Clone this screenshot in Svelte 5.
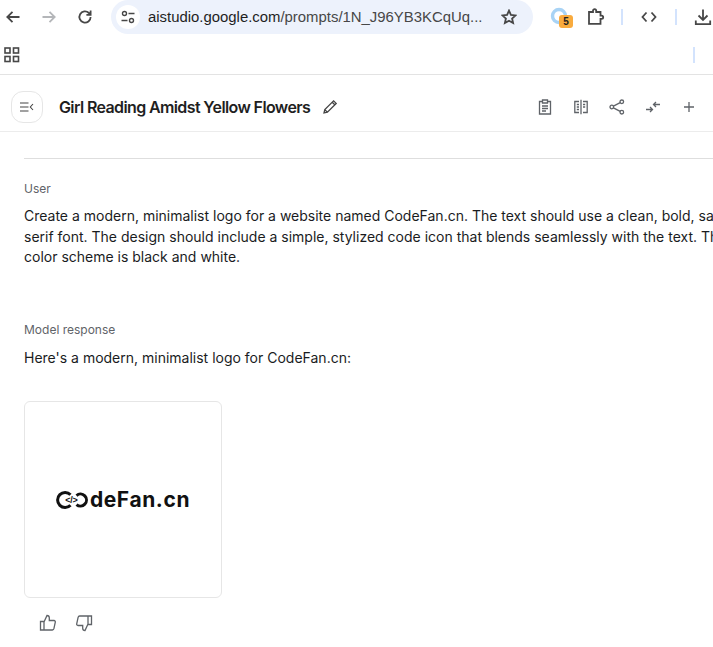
<script>
    const paragraph = 'Create a modern, minimalist logo for a website named CodeFan.cn. The text should use a clean, bold, sans-serif font. The design should include a simple, stylized code icon that blends seamlessly with the text. The color scheme is black and white.';
</script>

<div class="page">
    <div class="toolbar">
        <div class="nav">
            <svg width="16" height="16" viewBox="0 0 16 16" class="dark"><path d="M14.5 8H2.5M7.5 2.8 2.3 8l5.2 5.2" /></svg>
            <svg width="16" height="16" viewBox="0 0 16 16" class="muted"><path d="M1.5 8h12M8.5 2.8 13.7 8l-5.2 5.2" /></svg>
            <svg width="16" height="16" viewBox="0 0 16 16" class="dark"><path d="M13.6 8a5.6 5.6 0 1 1-1.7-4L13.6 5.7M13.6 1.6v4.2H9.4" /></svg>
        </div>
        <div class="omnibox">
            <span class="tune">
                <svg width="16" height="16" viewBox="0 0 16 16" class="dark thin"><circle cx="4.5" cy="4.5" r="2" /><path d="M8.5 4.5h6M1.5 11.5h6" /><circle cx="11.5" cy="11.5" r="2" /></svg>
            </span>
            <span class="url">aistudio.google.com<span class="path">/prompts/1N_J96YB3KCqUq...</span></span>
            <svg class="star dark" width="16" height="16" viewBox="0 0 16 16"><path d="M8 1.6l1.9 4.3 4.7.5-3.5 3.1 1 4.6L8 11.8l-4.1 2.3 1-4.6-3.5-3.1 4.7-.5z" /></svg>
        </div>
        <div class="extensions">
            <span class="ext-g">
                <svg width="20" height="20" viewBox="0 0 20 20"><circle cx="9" cy="9" r="6.5" fill="none" stroke="#a8d3f5" stroke-width="3.4" /></svg>
                <span class="badge">5</span>
            </span>
            <svg class="puzzle dark" width="18" height="18" viewBox="0 0 18 18"><path d="M2 4h4V2.8a1.6 1.6 0 0 1 3.2 0V4h4.3v3.6h1.1a1.6 1.6 0 0 1 0 3.2h-1.1v5H2z" /></svg>
            <span class="sep"></span>
            <svg class="code dark" width="16" height="16" viewBox="0 0 16 16"><path d="M5.5 3.5 1.5 8l4 4.5M10.5 3.5l4 4.5-4 4.5" /></svg>
            <span class="sep"></span>
            <svg class="download dark" width="18" height="18" viewBox="0 0 18 18"><path d="M9 1.5v10M4.5 7.5 9 12l4.5-4.5M1.8 12.5v3.7h14.4v-3.7" /></svg>
        </div>
    </div>

    <div class="bookmarks">
        <svg width="16" height="16" viewBox="0 0 16 16" class="grid-icon">
            <rect x="1" y="1" width="5" height="5" /><rect x="9.5" y="1" width="5" height="5" /><rect x="1" y="9.5" width="5" height="5" /><rect x="9.5" y="9.5" width="5" height="5" />
        </svg>
        <span class="bookmark-sep"></span>
    </div>

    <header class="studio-header">
        <button class="menu" aria-label="Toggle menu">
            <svg width="14" height="10" viewBox="0 0 14 10" class="menu-icon"><path d="M0 1h8.500M0 5h8.500M0 9h8.500M13 2 10.300 5 13 8" /></svg>
        </button>
        <h1>Girl Reading Amidst Yellow Flowers</h1>
        <svg class="pencil" width="16" height="16" viewBox="0 0 16 16"><path d="M2 14l.8-3.400L11.600 1.800l2.600 2.600-8.800 8.800zM2.800 10.600l2.600 2.600M10.200 3.200l2.600 2.600" /></svg>
        <div class="actions">
            <svg width="16" height="16" viewBox="0 0 16 16"><path d="M5.500 2.500H2.500v12.500h11V2.500h-3M5.500 1h5v3h-5zM5 7h6M5 9.500h6M5 12h4" /></svg>
            <svg width="16" height="16" viewBox="0 0 16 16"><path d="M8 .8v14.400M6 2.500H1.800v11H6M10 2.500h4.200v11H10M3.800 5.500H6M3.800 8H6M3.800 10.500H6M10 5.500h2.200M10 8h2.200" /></svg>
            <svg width="16" height="16" viewBox="0 0 16 16"><circle cx="12.800" cy="2.800" r="1.800" /><circle cx="2.800" cy="8" r="1.800" /><circle cx="12.800" cy="13.200" r="1.800" /><path d="M4.400 7.100l6.800-3.500M4.400 8.900l6.800 3.500" /></svg>
            <svg width="16" height="16" viewBox="0 0 16 16"><path d="M1 10.500h6.500M5 8l2.500 2.500L5 13M15 5.500H8.500M11 3 8.500 5.500 11 8" /></svg>
            <svg width="16" height="16" viewBox="0 0 16 16"><path d="M8 3v10M3 8h10" /></svg>
        </div>
    </header>

    <main class="chat">
        <hr />
        <section class="turn user-turn">
            <div class="role">User</div>
            <p>{paragraph}</p>
        </section>
        <section class="turn model-turn">
            <div class="role">Model response</div>
            <p class="reply">Here's a modern, minimalist logo for CodeFan.cn:</p>
            <div class="logo-card">
                <div class="logo">
                    <span class="logo-mark">
                        <svg width="34" height="18" viewBox="0 0 34 18">
                            <path d="M14.500 3.800A7.500 7.500 0 1 0 14.500 14.200" fill="none" stroke="#111" stroke-width="3" />
                            <path d="M20.500 4.500a6 6 0 1 1 0 9" fill="none" stroke="#111" stroke-width="3" />
                        </svg>
                        <span class="tag">&lt;/&gt;</span>
                    </span>
                    <span class="logo-text">deFan.cn</span>
                </div>
            </div>
            <div class="feedback">
                <svg width="18" height="18" viewBox="0 0 18 18"><path d="M1.500 7.500h3.500v8.500H1.500zM5 8l3-6.500c1.500 0 2.300 1 2.300 2.300V6.500h4.700c1 0 1.500.8 1.300 1.700l-1.400 6.500c-.2.800-.7 1.300-1.500 1.300H5" /></svg>
                <svg width="18" height="18" viewBox="0 0 18 18"><path d="M16.500 10.500H13V2h3.500zM13 10l-3 6.500c-1.500 0-2.300-1-2.300-2.300V11.500H3c-1 0-1.500-.8-1.300-1.700L3.100 3.300C3.300 2.500 3.800 2 4.600 2H13" /></svg>
            </div>
        </section>
    </main>
</div>

<style>
    :global(body) {
        margin: 0;
        background: #fff;
    }

    .page {
        width: 713px;
        height: 647px;
        overflow: hidden;
        font-family: Inter, "Liberation Sans", sans-serif;
        color: #1a1c1e;
    }

    svg {
        flex: none;
        display: block;
        fill: none;
        stroke: #5f6368;
        stroke-width: 1.300;
    }

    svg.dark {
        stroke: #474747;
        stroke-width: 1.800;
    }

    svg.dark.thin {
        stroke-width: 1.400;
    }

    svg.muted {
        stroke: #b4b6b9;
        stroke-width: 1.800;
    }

    .toolbar {
        display: flex;
        align-items: flex-start;
        height: 37px;
        width: 780px;
    }

    .nav {
        display: flex;
        align-items: center;
        gap: 20px;
        height: 34px;
        padding-left: 5px;
        width: 106px;
        box-sizing: border-box;
    }

    .omnibox {
        display: flex;
        align-items: center;
        width: 422px;
        height: 34px;
        margin-left: 5px;
        padding: 0 16px 0 5px;
        box-sizing: border-box;
        border-radius: 17px;
        background: #edf2fc;
    }

    .tune {
        display: flex;
        align-items: center;
        justify-content: center;
        width: 24px;
        height: 24px;
        border-radius: 50%;
        background: #fff;
    }

    .url {
        margin-left: 8px;
        font-family: "Liberation Sans", Arial, sans-serif;
        font-size: 14.900px;
        white-space: nowrap;
        color: #1f1f1f;
    }

    .path {
        color: #474747;
    }

    .star {
        margin-left: auto;
    }

    .extensions {
        display: flex;
        align-items: center;
        height: 34px;
        margin-left: 17px;
    }

    .ext-g {
        position: relative;
        width: 24px;
        height: 24px;
        padding-top: 2px;
        box-sizing: border-box;
    }

    .badge {
        position: absolute;
        left: 9px;
        top: 10px;
        width: 14px;
        height: 13px;
        border-radius: 3px;
        background: #f9ab3e;
        color: #222;
        font: bold 10px/13px "Liberation Sans", sans-serif;
        text-align: center;
    }

    .puzzle {
        margin-left: 13px;
    }

    .sep {
        width: 2px;
        height: 16px;
        margin: 0 16px;
        background: #d3e3fd;
    }

    .code {
        margin: 0 2px;
    }

    .download {
        margin-left: 1px;
    }

    .bookmarks {
        display: flex;
        align-items: center;
        justify-content: space-between;
        height: 38px;
        padding: 0 18px 2px 4px;
        box-sizing: border-box;
        border-bottom: 1px solid #e3e3e3;
    }

    .grid-icon {
        stroke: #474747;
        stroke-width: 1.600;
    }

    .bookmark-sep {
        width: 2px;
        height: 16px;
        background: #d3e3fd;
    }

    .studio-header {
        display: flex;
        align-items: center;
        height: 57px;
        padding: 7px 16px 0 11px;
        box-sizing: border-box;
        border-bottom: 1px solid #ececec;
    }

    .menu {
        display: flex;
        align-items: center;
        justify-content: center;
        width: 32px;
        height: 32px;
        padding: 0;
        background: #fff;
        border: 1px solid #e6e6e6;
        border-radius: 12px;
    }

    .menu-icon {
        stroke: #444;
        stroke-width: 1.100;
    }

    h1 {
        margin: 0 0 0 16px;
        font-size: 16px;
        line-height: 24px;
        font-weight: 600;
        letter-spacing: -0.620px;
        color: #1f1f1f;
        white-space: nowrap;
    }

    .pencil {
        margin-left: 12px;
        stroke: #444;
    }

    .actions {
        display: flex;
        align-items: center;
        gap: 20px;
        margin-left: auto;
    }

    .chat {
        padding: 26px 0 0 24px;
        width: 721px;
    }

    hr {
        margin: 0;
        border: 0;
        border-top: 1px solid #dedede;
    }

    .role {
        font-size: 12px;
        line-height: 16px;
        color: #5f6368;
    }

    .user-turn {
        margin-top: 22px;
    }

    p {
        margin: 9px 0 0;
        font-size: 14px;
        line-height: 20.500px;
        color: #1a1c1e;
    }

    p.reply {
        margin-top: 10px;
    }

    .model-turn {
        margin-top: 54px;
    }

    .logo-card {
        display: flex;
        align-items: center;
        justify-content: center;
        width: 198px;
        height: 197px;
        margin-top: 33px;
        box-sizing: border-box;
        border: 1px solid #e6e6e6;
        border-radius: 6px;
    }

    .logo {
        display: flex;
        align-items: center;
        margin-top: 1px;
    }

    .logo-mark {
        position: relative;
        width: 34px;
        height: 18px;
    }

    .tag {
        position: absolute;
        left: 9px;
        top: 3px;
        width: 13px;
        font: bold 9px/12px "Liberation Sans", sans-serif;
        letter-spacing: -0.200px;
        text-align: center;
        color: #111;
    }

    .logo-text {
        font-family: Inter, "Liberation Sans", sans-serif;
        font-size: 21px;
        line-height: 24px;
        font-weight: 700;
        letter-spacing: 0.600px;
        color: #111;
    }

    .feedback {
        display: flex;
        gap: 18px;
        margin: 16px 0 0 15px;
    }
</style>
